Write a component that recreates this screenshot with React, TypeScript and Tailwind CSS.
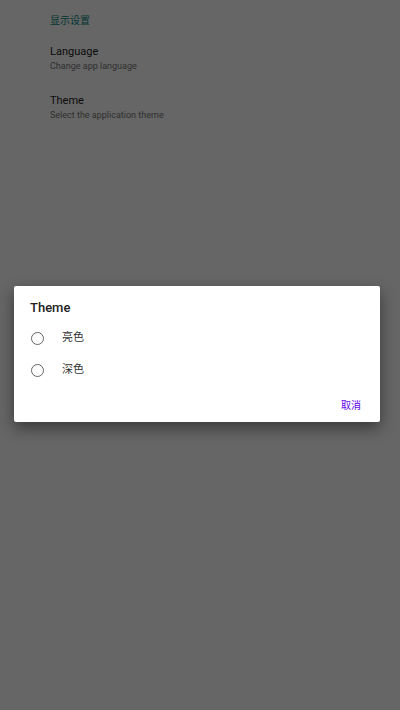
export default function App() {
  return (
    <div className="relative w-[400px] h-[710px] bg-white overflow-hidden font-['Roboto','Noto_Sans_CJK_SC',sans-serif]">
      {/* Settings list underneath */}
      <div className="pl-[50px] pt-[14px]">
        <p className="text-[10px] leading-[14px] text-[#01877a]">显示设置</p>
        <div className="mt-[17px]">
          <p className="text-[11px] leading-[14px] text-[#222]">Language</p>
          <p className="mt-[1px] text-[9px] leading-[12px] text-[#777]">Change app language</p>
        </div>
        <div className="mt-[22px]">
          <p className="text-[11px] leading-[14px] text-[#222]">Theme</p>
          <p className="mt-[1px] text-[9px] leading-[12px] text-[#777]">Select the application theme</p>
        </div>
      </div>

      {/* Scrim + dialog */}
      <div className="absolute inset-0 bg-black/60 pt-[286px] pl-[14px]">
        <div className="w-[366px] h-[136px] bg-white rounded-[2px] shadow-[0_6px_16px_rgba(0,0,0,0.45)] flex flex-col">
          <h2 className="pl-[16px] pt-[14px] text-[13px] leading-[16px] font-medium text-[#222]">Theme</h2>
          <div className="mt-[6px] flex flex-col">
            {["亮色", "深色"].map((label) => (
              <div key={label} className="flex items-center h-[32px] pl-[17px]">
                <span className="w-[13px] h-[13px] rounded-full border-[1.5px] border-[#666]" />
                <span className="ml-[18px] text-[11px] text-[#333]">{label}</span>
              </div>
            ))}
          </div>
          <div className="mt-auto mb-[10px] flex justify-end pr-[19px]">
            <span className="text-[10px] leading-[12px] text-[#6200ee]">取消</span>
          </div>
        </div>
      </div>
    </div>
  )
}
